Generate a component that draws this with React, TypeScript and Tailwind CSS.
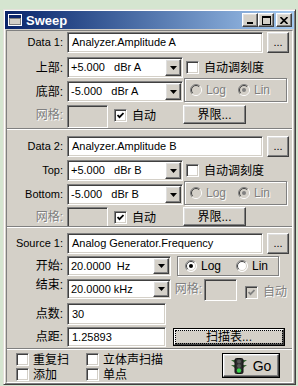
import React from 'react';

const raised =
  'bg-[#d4d0c8] border border-t-white border-l-white border-r-[#404040] border-b-[#404040] shadow-[inset_-1px_-1px_0_#808080,inset_1px_1px_0_#dfdfdf]';
const sunken =
  'border border-t-[#808080] border-l-[#808080] border-r-white border-b-white shadow-[inset_1px_1px_0_#404040,inset_-1px_-1px_0_#d4d0c8]';
const dim = 'text-[#808080] [text-shadow:1px_1px_0_#ffffff]';
const etched = 'border border-[#808080] shadow-[1px_1px_0_#ffffff,inset_1px_1px_0_#ffffff]';

function Label({ children, cjk, off }: { children: React.ReactNode; cjk?: boolean; off?: boolean }) {
  return (
    <div className={`w-[60px] shrink-0 pr-[4px] text-right ${cjk ? 'text-[12px]' : ''} ${off ? dim : ''}`}>
      {children}
    </div>
  );
}

function Field({ className = '', children, off }: { className?: string; children?: React.ReactNode; off?: boolean }) {
  return (
    <div
      className={`${sunken} ${off ? 'bg-[#d4d0c8]' : 'bg-white'} shrink-0 flex items-center pl-[4px] whitespace-pre ${className}`}
    >
      {children}
    </div>
  );
}

function Combo({ className = '', children }: { className?: string; children: React.ReactNode }) {
  return (
    <div className={`${sunken} bg-white shrink-0 flex items-stretch p-[1px] ${className}`}>
      <div className="flex-1 flex items-center pl-[2px] whitespace-pre">{children}</div>
      <div className={`${raised} w-[16px] flex items-center justify-center`}>
        <svg width="7" height="4" viewBox="0 0 7 4">
          <path d="M0 0h7L3.5 4z" fill="#000" />
        </svg>
      </div>
    </div>
  );
}

function Btn({ className = '', children }: { className?: string; children: React.ReactNode }) {
  return <div className={`${raised} shrink-0 flex items-center justify-center ${className}`}>{children}</div>;
}

function Check({ on, off, className = '' }: { on?: boolean; off?: boolean; className?: string }) {
  return (
    <div
      className={`${sunken} w-[13px] h-[13px] shrink-0 flex items-center justify-center ${off ? 'bg-[#d4d0c8]' : 'bg-white'} ${className}`}
    >
      {on && (
        <svg width="7" height="7" viewBox="0 0 7 7">
          <path d="M0.5 3L2.5 5.2L6.5 1" fill="none" stroke={off ? '#808080' : '#000'} strokeWidth="1.8" />
        </svg>
      )}
    </div>
  );
}

function Radio({ on, off }: { on?: boolean; off?: boolean }) {
  return (
    <svg width="12" height="12" viewBox="0 0 12 12" className="shrink-0">
      <circle cx="6" cy="6" r="5.5" fill={off ? '#d4d0c8' : '#ffffff'} />
      <path d="M2.1 9.9A5.5 5.5 0 0 1 9.9 2.1" fill="none" stroke="#808080" />
      <path d="M9.9 2.1A5.5 5.5 0 0 1 2.1 9.9" fill="none" stroke="#ffffff" />
      <path d="M2.8 9.2A4.5 4.5 0 0 1 9.2 2.8" fill="none" stroke="#404040" />
      <path d="M9.2 2.8A4.5 4.5 0 0 1 2.8 9.2" fill="none" stroke="#d4d0c8" />
      {on && <circle cx="6" cy="6" r="2" fill={off ? '#808080' : '#000000'} />}
    </svg>
  );
}

function LogLin({ off, log, className = '', gap }: { off?: boolean; log?: boolean; className?: string; gap: string }) {
  return (
    <div className={`${etched} shrink-0 flex items-center ${className}`}>
      <Radio on={log} off={off} />
      <span className={`ml-[4px] text-[12px] ${off ? dim : ''}`}>Log</span>
      <span className={gap} />
      <Radio on={!log} off={off} />
      <span className={`ml-[4px] text-[12px] ${off ? dim : ''}`}>Lin</span>
    </div>
  );
}

function TitleBar() {
  return (
    <div className="h-[18px] shrink-0 bg-linear-to-r from-[#0a246a] to-[#a6caf0] flex items-center pl-[3px] pr-[2px]">
      <svg width="14" height="12" viewBox="0 0 14 12">
        <rect x="0.5" y="0.5" width="13" height="11" fill="#d4d0c8" stroke="#ffffff" />
        <rect x="1" y="1" width="12" height="3" fill="#0a246a" />
        <rect x="1.5" y="4.5" width="11" height="6" fill="#d4d0c8" stroke="#808080" />
      </svg>
      <span className="ml-[4px] text-white font-bold text-[13px]">Sweep</span>
      <div className="ml-auto flex">
        <Btn className="w-[16px] h-[14px]">
          <svg width="8" height="8" viewBox="0 0 8 8">
            <rect x="1" y="6" width="6" height="2" fill="#000" />
          </svg>
        </Btn>
        <Btn className="w-[16px] h-[14px]">
          <svg width="9" height="9" viewBox="0 0 9 9">
            <rect x="0.5" y="0.5" width="8" height="8" fill="none" stroke="#000" />
            <rect x="0" y="0" width="9" height="2" fill="#000" />
          </svg>
        </Btn>
        <Btn className="ml-[2px] w-[16px] h-[14px]">
          <svg width="8" height="7" viewBox="0 0 8 7">
            <path d="M0.5 0L7.5 7M7.5 0L0.5 7" stroke="#000" strokeWidth="1.6" />
          </svg>
        </Btn>
      </div>
    </div>
  );
}

function Sep() {
  return <div className="h-[2px] shrink-0 border-t border-t-[#808080] border-b border-b-white" />;
}

function DataRow({ label, value, className = '' }: { label: string; value: string; className?: string }) {
  return (
    <div className={`flex items-center h-[21px] ${className}`}>
      <Label>{label}</Label>
      <Field className="w-[196px] h-[21px]">{value}</Field>
      <Btn className="ml-[4px] w-[22px] h-[21px] items-end pb-[4px]">...</Btn>
    </div>
  );
}

function GridRow({ className = '', fieldH }: { className?: string; fieldH: string }) {
  return (
    <div className={`flex items-start ${className}`}>
      <div className="mt-[4px]">
        <Label cjk off>
          网格:
        </Label>
      </div>
      <Field off className={`w-[41px] ${fieldH}`} />
      <div className="w-[75px] shrink-0 flex items-center pl-[6px] mt-[4px]">
        <Check on />
        <span className="ml-[5px] text-[12px]">自动</span>
      </div>
      <Btn className="w-[63px] h-[19px] text-[12px]">界限...</Btn>
    </div>
  );
}

function RangeBlock({ top, bottom, unit, className = '' }: { top: string; bottom: string; unit: string; className?: string }) {
  const cjk = top === '上部:';
  return (
    <div className={`flex ${className}`}>
      <div className="w-[177px] shrink-0 flex flex-col">
        <div className="flex items-center h-[21px]">
          <Label cjk={cjk}>{top}</Label>
          <Combo className="w-[116px] h-[21px]">{`+5.000   dBr ${unit}`}</Combo>
        </div>
        <div className="flex items-center h-[21px] mt-[3px]">
          <Label cjk={cjk}>{bottom}</Label>
          <Combo className="w-[116px] h-[21px]">{`-5.000   dBr ${unit}`}</Combo>
        </div>
      </div>
      <div className="flex flex-col">
        <div className="h-[21px] flex items-center pl-[2px]">
          <Check />
          <span className="ml-[5px] text-[12px]">自动调刻度</span>
        </div>
        <LogLin off className="w-[103px] h-[24px] pl-[5px]" gap="w-[12px]" />
      </div>
    </div>
  );
}

export default function App() {
  return (
    <div className="w-[298px] h-[386px] bg-[#d5e5d0] pt-[9px] pl-[3px] text-[11px] text-black leading-none [font-family:'Liberation_Sans','Noto_Sans_CJK_SC',sans-serif]">
      <div className="w-[293px] h-[376px] bg-[#d4d0c8] border border-t-[#e4e1da] border-l-[#e4e1da] border-r-[#404040] border-b-[#404040] p-[1px] shadow-[inset_1px_1px_0_#ffffff,inset_-1px_-1px_0_#808080] flex flex-col">
        <TitleBar />
        <div className="mt-[1px] mx-[1px] flex-1 border border-t-[#808080] border-l-[#808080] border-r-white border-b-white flex flex-col">
          {/* Data 1 */}
          <div className="h-[97px] shrink-0 overflow-hidden">
            <DataRow label="Data 1:" value="Analyzer.Amplitude A" className="mt-[1px]" />
            <RangeBlock top="上部:" bottom="底部:" unit="A" className="mt-[4px]" />
            <GridRow className="mt-[3px]" fieldH="h-[23px]" />
          </div>
          <Sep />
          {/* Data 2 */}
          <div className="h-[96px] shrink-0 overflow-hidden">
            <DataRow label="Data 2:" value="Analyzer.Amplitude B" className="mt-[6px]" />
            <RangeBlock top="Top:" bottom="Bottom:" unit="B" className="mt-[3px]" />
            <GridRow className="mt-[2px]" fieldH="h-[21px]" />
          </div>
          <Sep />
          {/* Source */}
          <div className="h-[120px] shrink-0 overflow-hidden">
            <DataRow label="Source 1:" value="Analog Generator.Frequency" className="mt-[5px]" />
            <div className="flex items-center h-[20px] mt-[2px]">
              <Label cjk>开始:</Label>
              <Combo className="w-[104px] h-[20px]">20.0000  Hz</Combo>
              <LogLin log className="ml-[6px] w-[102px] h-[20px] pl-[7px]" gap="w-[15px]" />
            </div>
            <div className="flex items-start h-[24px] mt-[3px]">
              <Label cjk>结束:</Label>
              <Combo className="w-[104px] h-[20px]">20.0000 kHz</Combo>
              <div className={`w-[33px] shrink-0 pr-[2px] text-right text-[12px] mt-[4px] ${dim}`}>网格:</div>
              <Field off className="w-[33px] h-[22px]" />
              <Check on off className="ml-[8px] mt-[7px]" />
              <span className={`ml-[5px] mt-[7px] text-[12px] ${dim}`}>自动</span>
            </div>
            <div className="flex items-center h-[22px]">
              <Label cjk>点数:</Label>
              <Field className="w-[99px] h-[22px]">30</Field>
            </div>
            <div className="flex items-start h-[21px] mt-[2px]">
              <div className="mt-[4px]">
                <Label cjk>点距:</Label>
              </div>
              <Field className="w-[99px] h-[20px]">1.25893</Field>
              <div className="ml-[7px] mt-[1px] w-[112px] h-[18px] border border-black shrink-0">
                <Btn className="w-full h-full p-0">
                  <div className="w-full h-full border border-dotted border-black flex items-center justify-center text-[12px] leading-[12px]">
                    扫描表...
                  </div>
                </Btn>
              </div>
            </div>
          </div>
          <Sep />
          {/* Options */}
          <div className="flex-1 flex pt-[3px] pl-[9px]">
            <div className="grid grid-cols-[70px_auto] gap-y-[2px] content-start text-[12px]">
              <div className="flex items-center h-[13px]">
                <Check />
                <span className="ml-[4px]">重复扫</span>
              </div>
              <div className="flex items-center h-[13px]">
                <Check />
                <span className="ml-[4px]">立体声扫描</span>
              </div>
              <div className="flex items-center h-[13px]">
                <Check />
                <span className="ml-[4px]">添加</span>
              </div>
              <div className="flex items-center h-[13px]">
                <Check />
                <span className="ml-[4px]">单点</span>
              </div>
            </div>
            <div className="ml-auto mr-[12px] w-[58px] h-[25px] border border-black">
              <Btn className="w-full h-full">
                <svg width="16" height="16" viewBox="0 0 16 16">
                  <path d="M0 2h4v3zM0 7h4v3zM16 2h-4v3zM16 7h-4v3z" fill="#3d6b3a" />
                  <rect x="4" y="0.5" width="8" height="15" rx="1.5" fill="#2b2b2b" stroke="#111" />
                  <circle cx="8" cy="3.5" r="2" fill="#555" />
                  <circle cx="8" cy="8" r="2" fill="#555" />
                  <circle cx="8" cy="12.5" r="2.2" fill="#39d34a" />
                </svg>
                <span className="ml-[6px] text-[14px]">Go</span>
              </Btn>
            </div>
          </div>
        </div>
      </div>
    </div>
  );
}
